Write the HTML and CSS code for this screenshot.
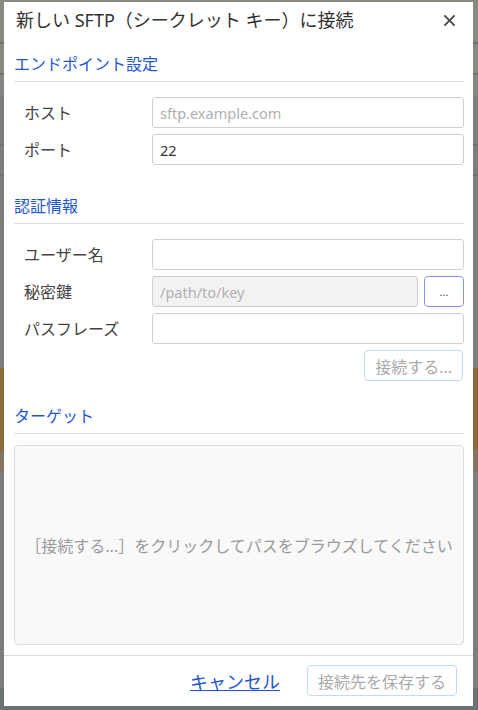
FILE: index.html
```html
<!DOCTYPE html>
<html lang="ja">
  <head>
    <meta charset="UTF-8" />
    <meta name="viewport" content="width=device-width, initial-scale=1.0" />
    <title>新しい SFTP（シークレット キー）に接続</title>
    <link rel="stylesheet" href="styles.css">
  </head>
  <body>
    <div class="backdrop"></div>

    <div class="dialog">
      <div class="dialog-header">
        <h1 class="dialog-title">新しい SFTP（シークレット キー）に接続</h1>
        <button class="close-btn" aria-label="閉じる">
          <svg viewBox="0 0 14 14">
            <path d="M1.5 1.5 L12.5 12.5 M12.5 1.5 L1.5 12.5" />
          </svg>
        </button>
      </div>

      <div class="dialog-body">
        <section class="section">
          <h2 class="section-title">エンドポイント設定</h2>
          <div class="fields">
            <div class="field">
              <label class="field-label">ホスト</label>
              <input class="text-input" type="text" placeholder="sftp.example.com" />
            </div>
            <div class="field">
              <label class="field-label">ポート</label>
              <input class="text-input" type="text" value="22" />
            </div>
          </div>
        </section>

        <section class="section">
          <h2 class="section-title">認証情報</h2>
          <div class="fields">
            <div class="field">
              <label class="field-label">ユーザー名</label>
              <input class="text-input" type="text" />
            </div>
            <div class="field">
              <label class="field-label">秘密鍵</label>
              <input class="text-input" type="text" placeholder="/path/to/key" disabled />
              <button class="browse-btn">...</button>
            </div>
            <div class="field">
              <label class="field-label">パスフレーズ</label>
              <input class="text-input" type="password" />
            </div>
          </div>
          <div class="field-actions">
            <button class="btn" disabled>接続する...</button>
          </div>
        </section>

        <section class="section section-last">
          <h2 class="section-title">ターゲット</h2>
          <div class="target-box">
            ［接続する...］をクリックしてパスをブラウズしてください
          </div>
        </section>
      </div>

      <div class="dialog-footer">
        <a class="cancel-link" href="#">キャンセル</a>
        <button class="btn" disabled>接続先を保存する</button>
      </div>
    </div>
  </body>
</html>
```

FILE: styles.css
```css
* {
  margin: 0;
  padding: 0;
  box-sizing: border-box;
}

body {
  font-family: "Noto Sans", "Noto Sans CJK JP", sans-serif;
  height: 100vh;
  overflow: hidden;
  background-color: #7e7e7e;
  color: #333;
}

/* dimmed page behind the dialog */
.backdrop {
  height: 100%;
  background:
    linear-gradient(to bottom,
      #878a80 0, #878a80 42px, #6f716c 42px, #6f716c 44px,
      #878a80 44px, #878a80 73px, #6f716c 73px, #6f716c 75px,
      #858782 75px, #858782 96px, #7e7e7e 96px, #7e7e7e 144px,
      #707070 144px, #707070 146px, #7e7e7e 146px, #7e7e7e 174px,
      #707070 174px, #707070 176px, #7e7e7e 176px, #7e7e7e 368px,
      #8c6b3a 368px, #8c6b3a 450px, #857560 450px, #857560 472px,
      #7e7e7e 472px, #7e7e7e 688px, #6c7274 688px);
}

.dialog {
  position: absolute;
  top: 2px;
  left: 4px;
  width: 469px;
  height: 704px;
  background-color: #fff;
  display: flex;
  flex-direction: column;
}

.dialog-header {
  height: 36px;
  display: flex;
  align-items: center;
  justify-content: space-between;
  padding: 0 17px 0 12px;
}

.dialog-title {
  font-size: 18px;
  font-weight: 400;
  line-height: 36px;
  color: #333;
  white-space: nowrap;
}

.close-btn {
  width: 13px;
  height: 13px;
  border: none;
  background: none;
  display: flex;
  cursor: pointer;
}

.close-btn svg {
  width: 13px;
  height: 13px;
  stroke: #4a4a4a;
  stroke-width: 2.1;
  fill: none;
}

.dialog-body {
  flex: 1;
  padding: 15px 9px 0 10px;
  display: flex;
  flex-direction: column;
}

.section {
  margin-bottom: 24px;
}

.section-last {
  flex: 1;
  display: flex;
  flex-direction: column;
  margin-bottom: 10px;
}

.section-title {
  font-size: 16px;
  font-weight: 400;
  line-height: 22px;
  color: #1f57d2;
  padding-bottom: 6px;
  border-bottom: 1px solid #dcdcdc;
}

.fields {
  margin-top: 15px;
  display: flex;
  flex-direction: column;
  gap: 6px;
}

.section .fields:last-child {
  margin-bottom: 6px;
}

.field {
  display: flex;
  align-items: center;
  gap: 6px;
}

.field-label {
  width: 132px;
  flex-shrink: 0;
  padding-left: 10px;
  padding-bottom: 2px;
  font-size: 16px;
  color: #444;
}

.text-input {
  flex: 1;
  min-width: 0;
  height: 31px;
  border: 1px solid #cfcfcf;
  border-radius: 3px;
  padding: 0 7px;
  font-family: inherit;
  font-size: 14.5px;
  color: #333;
  background-color: #fff;
  outline: none;
}

.text-input::placeholder {
  color: #b0b0b0;
}

.text-input:disabled {
  background-color: #f2f2f2;
}

.browse-btn {
  width: 40px;
  height: 31px;
  flex-shrink: 0;
  border: 1px solid #8d8ef5;
  border-radius: 4px;
  background-color: #fff;
  color: #555;
  font-family: inherit;
  font-size: 11px;
  cursor: pointer;
}

.field-actions {
  display: flex;
  justify-content: flex-end;
  margin-top: 6px;
  padding-right: 1px;
}

.btn {
  height: 31px;
  padding: 0 10px;
  border: 1px solid #c7d7f7;
  border-radius: 4px;
  background-color: #fff;
  color: #aaa;
  font-family: inherit;
  font-size: 16px;
}

.target-box {
  flex: 1;
  margin-top: 11px;
  border: 1px solid #dcdcdc;
  border-radius: 4px;
  background-color: #f9f9f9;
  display: flex;
  align-items: center;
  justify-content: center;
  font-size: 16px;
  color: #9a9a9a;
  white-space: nowrap;
}

.dialog-footer {
  height: 51px;
  border-top: 1px solid #dcdcdc;
  display: flex;
  align-items: center;
  justify-content: flex-end;
  gap: 27px;
  padding: 0 16px 1px 0;
}

.cancel-link {
  font-size: 18px;
  color: #1f57d2;
  text-decoration: underline;
}
```
